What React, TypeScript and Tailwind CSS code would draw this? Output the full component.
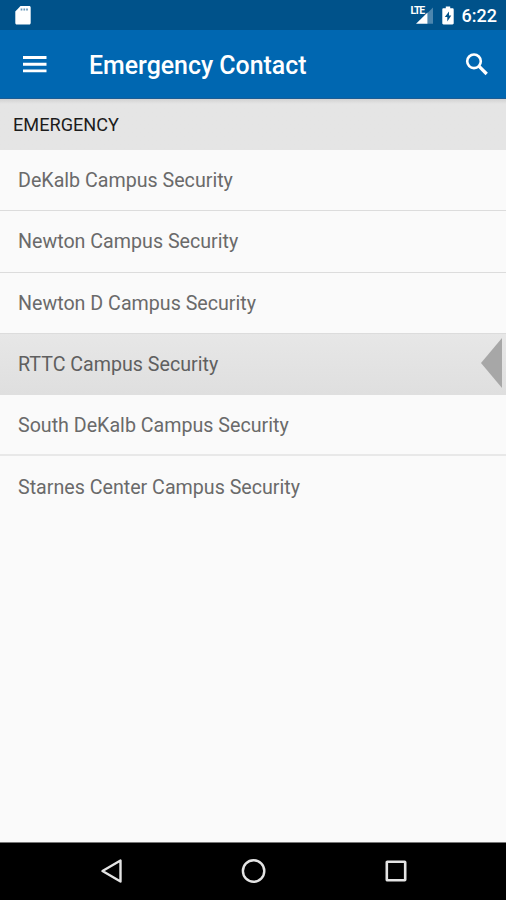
import clsx from "clsx";

const contacts = [
  { name: "DeKalb Campus Security" },
  { name: "Newton Campus Security" },
  { name: "Newton D Campus Security" },
  { name: "RTTC Campus Security", selected: true },
  { name: "South DeKalb Campus Security", thick: true },
  { name: "Starnes Center Campus Security", last: true },
];

function StatusBar() {
  return (
    <div className="flex h-[30px] shrink-0 items-center justify-between bg-[#00528a] pr-[9px] pl-[15px] text-white">
      <svg width="16" height="20" viewBox="0 0 16 20" className="block">
        <path
          d="M5.500 1h8.700c.9 0 1.500.6 1.500 1.500v15.500c0 .9-.6 1.500-1.500 1.500H1.800c-.9 0-1.500-.6-1.500-1.500V6.500z"
          fill="currentColor"
        />
        <path d="M6.500 3.500v2M9.300 3.500v2M12 3.500v2" stroke="#00528a" strokeWidth="1.700" opacity=".6" />
      </svg>
      <div className="flex items-center">
        <div className="relative h-[20px] w-[23px]">
          <svg width="23" height="20" viewBox="0 0 23 20" className="block">
            <path d="M22 2.500v16.200h-5.500V8z" fill="#4d86ae" />
            <path d="M16.500 7.500v11.200H5z" fill="currentColor" />
          </svg>
          <span className="absolute top-px left-0 bg-[#00528a] text-[10.500px] leading-[10px] font-bold tracking-[-1.200px]">
            LTE
          </span>
        </div>
        <svg width="12" height="19" viewBox="0 0 12 19" className="ml-[8px] block">
          <path
            d="M3.800.5h4.400v1.800h2.300c.7 0 1.200.5 1.200 1.200v13.800c0 .7-.5 1.200-1.200 1.200h-9c-.7 0-1.200-.5-1.200-1.200V3.500c0-.7.5-1.200 1.200-1.200h2.300z"
            fill="currentColor"
          />
          <path d="M7 5.500l-4.200 5.500h2.500v4.500l4-6H7z" fill="#00528a" />
        </svg>
        <span className="ml-[8px] pt-[2px] text-[18px] leading-none font-medium">6:22</span>
      </div>
    </div>
  );
}

function AppBar() {
  return (
    <header className="flex h-[69px] shrink-0 items-center border-b border-[#1c5c93] bg-[#0067b1] pr-[16px] pl-[23px] text-white">
      <svg width="24" height="18" viewBox="0 0 24 18" className="block">
        <path d="M0 2.500h23.500M0 9.200h23.500M0 15.900h23.500" stroke="currentColor" strokeWidth="2.900" />
      </svg>
      <h1 className="ml-[42px] flex-1 pt-[5px] text-[24.900px] leading-none font-medium">Emergency Contact</h1>
      <svg width="26" height="26" viewBox="0 0 26 26" className="block">
        <circle cx="10" cy="10.300" r="6.800" fill="none" stroke="currentColor" strokeWidth="2.600" />
        <path d="M14.900 15.200l7.800 7.800" stroke="currentColor" strokeWidth="3.300" />
      </svg>
    </header>
  );
}

function ContactList() {
  return (
    <ul>
      {contacts.map((contact) => (
        <li
          key={contact.name}
          className={clsx(
            "flex h-[61.300px] items-center justify-between pr-[4px] pl-[18px] text-[19.650px] leading-[30px]",
            contact.thick ? "pt-[3px]" : "pt-[2px]",
            contact.selected
              ? "border-b border-[#dfdfdf] bg-linear-to-b from-[#e7e7e7] to-[#dfdfdf] text-[#5f5f5f]"
              : "text-[#6a6a6a]",
            contact.thick && "border-b-2 border-[#e8e8e8]",
            contact.last && "border-b border-transparent",
            !contact.selected && !contact.thick && !contact.last && "border-b border-[#dcdcdc]",
          )}
        >
          {contact.name}
          {contact.selected && (
            <svg width="21" height="50" viewBox="0 0 21 50" className="mb-[5px] block">
              <path d="M21 0v50L0 25z" fill="#a7a7a7" />
            </svg>
          )}
        </li>
      ))}
    </ul>
  );
}

function NavigationBar() {
  return (
    <nav className="flex h-[58px] shrink-0 items-center justify-between border-t border-[#777] bg-black pr-[99px] pb-[2px] pl-[100px] text-[#e4e4e4]">
      <svg width="22" height="26" viewBox="0 0 22 26" className="block" fill="none" stroke="currentColor" strokeWidth="2.400">
        <path d="M20.500 2.500v21L2.500 13z" strokeLinejoin="round" />
      </svg>
      <svg width="26" height="26" viewBox="0 0 26 26" className="block" fill="none" stroke="currentColor" strokeWidth="2.400">
        <circle cx="12.600" cy="13" r="10.700" />
      </svg>
      <svg width="22" height="22" viewBox="0 0 22 22" className="block" fill="none" stroke="currentColor" strokeWidth="2.600">
        <rect x="1.800" y="1.800" width="18.400" height="18.400" rx=".5" />
      </svg>
    </nav>
  );
}

export default function App() {
  return (
    <div className="flex h-[900px] w-[506px] flex-col overflow-hidden bg-[#fafafa] font-['Roboto',sans-serif]">
      <StatusBar />
      <AppBar />
      <main className="flex-1">
        <h2 className="flex h-[51px] items-center bg-[#e5e5e5] bg-linear-to-b from-[#d2d2d2] to-[#e5e5e5] to-[5px] pl-[13px] text-[18.150px] text-[#1c1c1c]">
          EMERGENCY
        </h2>
        <ContactList />
      </main>
      <NavigationBar />
    </div>
  );
}
